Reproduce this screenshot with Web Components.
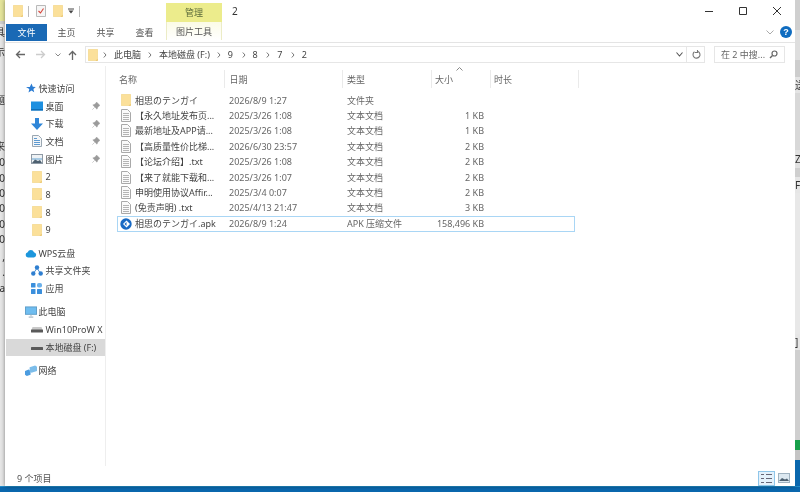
<!DOCTYPE html>
<html lang="zh">
<head>
<meta charset="utf-8">
<title>2</title>
<style>
  html, body { margin: 0; height: 492px; overflow: hidden; background: #0a67ad; }
  body { font: 9px "Noto Sans", "Noto Sans CJK SC", sans-serif; color: #444; }
</style>
</head>
<body>
<x-desktop>
  <x-edge slot="left" side="left"></x-edge>
  <x-window slot="window">
    <x-ribbon></x-ribbon>
    <x-address></x-address>
    <x-nav slot="nav"></x-nav>
    <x-files slot="files"></x-files>
    <x-status slot="status">9 个项目</x-status>
  </x-window>
  <x-edge slot="right" side="right"></x-edge>
</x-desktop>

<script>
const ICONS = {
  folder: `<svg viewBox="0 0 10 12" width="10" height="12"><path d="M.3.500h9.400v11H.3z" fill="#fbe09a" stroke="#f1d27c" stroke-width=".6"/><path d="M7.500 11.700l2.200-2v2z" fill="#e8c46c"/></svg>`,
  doc: `<svg viewBox="0 0 10 13" width="10" height="13"><path d="M.5.500h6l3 3v9h-9z" fill="#fafafa" stroke="#a9a9a9"/><path d="M2 4.500h6M2 6.500h6M2 8.500h6M2 10.500h6" stroke="#b4b4b4"/></svg>`,
  apk: `<svg viewBox="0 0 12 12" width="12" height="12"><circle cx="6" cy="6" r="5.700" fill="#1769c4"/><path d="M6.500 2.500L10 6l-3.500 3.500L3 6z" fill="#fff"/><path d="M4.500 6l2-2v4z" fill="#1769c4"/></svg>`,
  star: `<svg viewBox="0 0 11 11" width="11" height="11"><path d="M6.500.5l1.300 3.300 3 .2-2.400 2 .8 3.300-2.700-1.700-3 2 .8-3.500L1 4h3.800z" fill="#2b7cd3"/></svg>`,
  desk: `<svg viewBox="0 0 12 10" width="12" height="10"><rect width="12" height="9" y=".5" fill="#1e90e0"/><rect y="8" width="12" height="1.500" fill="#0f6fb8"/></svg>`,
  down: `<svg viewBox="0 0 12 12" width="12" height="12"><path d="M4 0h4v5.500h4L6 12 0 5.500h4z" fill="#2f86d8"/></svg>`,
  docs: `<svg viewBox="0 0 10 12" width="10" height="12"><path d="M.5.500h6l3 3v8h-9z" fill="#f4f6f8" stroke="#9aa7b2"/><path d="M2 5.500h6M2 7.500h6M2 9.500h6M2 3.500h3" stroke="#5e9ad0"/></svg>`,
  pic: `<svg viewBox="0 0 12 10" width="12" height="10"><rect x=".5" y=".5" width="11" height="9" fill="#eef2f5" stroke="#8f9aa5"/><path d="M1 4h10v2H1z" fill="#a9cbe4"/><path d="M1 9l3-3.500 3 1.500 2-1 2 3z" fill="#4d6070"/></svg>`,
  cloud: `<svg viewBox="0 0 12 9" width="12" height="9"><path d="M3 8.500a2.700 2.700 0 0 1-.3-5.300A3.400 3.400 0 0 1 9 3.200a2.700 2.700 0 0 1 0 5.300z" fill="#1c96dc"/></svg>`,
  share: `<svg viewBox="0 0 12 11" width="12" height="11"><path d="M6 3L2.500 8.500M6 3l3.500 5.500" stroke="#4d93d8"/><circle cx="6" cy="2.500" r="2.200" fill="#2f7fd0"/><circle cx="2.300" cy="8.500" r="2.200" fill="#2f7fd0"/><circle cx="9.700" cy="8.500" r="2.200" fill="#2f7fd0"/></svg>`,
  apps: `<svg viewBox="0 0 11 11" width="11" height="11"><g fill="#3b8fdc"><rect width="4.500" height="4.500" rx=".6"/><rect x="6" width="5" height="4.500" rx="1.800" fill="#6bb0ea"/><rect y="6" width="4.500" height="5" rx=".6"/><rect x="6" y="6" width="5" height="5" rx=".6"/></g></svg>`,
  pc: `<svg viewBox="0 0 13 12" width="13" height="12"><rect x=".5" y=".5" width="12" height="8" fill="#6fbdf0" stroke="#5d9cc7"/><path d="M4 11h5v1H4z" fill="#8fa3b3"/><path d="M6 9h1v2H6z" fill="#a8b8c4"/></svg>`,
  drive: `<svg viewBox="0 0 12 7" width="12" height="7"><path d="M1.500 1h9l1 3H.5z" fill="#c9c9c9"/><rect y="3.500" width="12" height="3" rx=".5" fill="#595959"/></svg>`,
  driveF: `<svg viewBox="0 0 12 7" width="12" height="7"><rect y="3" width="12" height="3" rx=".5" fill="#5a5a5a"/></svg>`,
  net: `<svg viewBox="0 0 13 12" width="13" height="12"><path d="M0 6l4-1.500 2 1.500V10l-4 1.500L0 10z" fill="#4b9ce0"/><path d="M5 2l6-2 2 1.500V6l-6 2-2-1.500z" fill="#7cbdea"/></svg>`,
  pin: `<svg viewBox="0 0 8 8" width="8" height="8"><path d="M4.500 0L8 3.500 6.800 4 5.500 5.800 5 7.200 .8 3 2.200 2.500 4 1.200zM2.600 5.400L.3 7.700" fill="#9a9a9a" stroke="#9a9a9a" stroke-width=".5"/></svg>`
};

class XDesktop extends HTMLElement {
  constructor() {
    super();
    this.attachShadow({ mode: 'open' });
    this.shadowRoot.innerHTML = `
      <style>
        :host { display: grid; grid-template-columns: 5px 1fr 5px; grid-template-rows: 486px 6px; width: 800px; height: 492px; }
        .bar { grid-column: 1 / 4; background: linear-gradient(#39b4e8 0, #0a67ad 1px); }
      </style>
      <slot name="left"></slot>
      <slot name="window"></slot>
      <slot name="right"></slot>
      <div class="bar"></div>`;
  }
}

// bits of the windows behind, cut off by the window edge
class XEdge extends HTMLElement {
  constructor() {
    super();
    this.attachShadow({ mode: 'open' });
  }
  connectedCallback() {
    const left = this.getAttribute('side') === 'left';
    const L = '#e6e6e6', R = '#d8d8d8';
    const cells = left
      ? [[21, '', '#e4e49a'], [3, '', '#cfcfcf'], [16, '具', L], [4, '', L], [16, '示', L], [32, '', L], [16, '题', L], [30, '', L], [15, '来', L], [1.500, '', L],
         [15.400, '0', L], [15.400, '0', L], [15.400, '0', L], [15.400, '0', L], [15.400, '0', L], [15.400, '0', L], [2.400, '', L],
         [15.400, ',', L], [15.400, '.', L], [15.400, 'a', L], [0, '', L]]
      : [[30, '', '#cfcfcf'], [30, '', '#dedede'], [17, '', '#cdcdcd'], [16, '送', '#e4e4e4'], [57, '', R], [18, 'Z', '#e2e2e2'], [9, '', '#cfcfcf'], [16, 'F', '#e6e6e6'],
         [141, '', '#e8e8e8'], [16, ']', '#e6e6e6'], [90, '', '#cfcfcf'], [10, '', '#18a04a'], [10, '', '#c4c4c4'], [26, '', '#0a67ad']];
    const rows = cells.map(c => {
      const size = c[0] ? `height:${c[0]}px` : 'flex:1';
      return `<div style="${size};background:${c[2]}">${c[1]}</div>`;
    }).join('');
    this.shadowRoot.innerHTML = `
      <style>
        :host { display: flex; flex-direction: column; overflow: hidden; filter: blur(.4px); font: 10px "Noto Sans", "Noto Sans CJK SC", sans-serif; color: #333; }
        div { display: flex; align-items: center; line-height: 1; overflow: hidden; flex: none; justify-content: ${left ? 'flex-end' : 'flex-start'}; }
        div:last-child { flex: 1; }
      </style>${rows}`;
  }
}

class XWindow extends HTMLElement {
  constructor() {
    super();
    this.attachShadow({ mode: 'open' });
    this.shadowRoot.innerHTML = `
      <style>
        :host { display: flex; flex-direction: column; background: #fff; height: 486px; box-shadow: 0 0 4px rgba(0,0,0,.45); position: relative; filter: blur(.35px); }
        .main { display: flex; height: 400px; }
      </style>
      <slot></slot>
      <div class="main">
        <slot name="nav"></slot>
        <slot name="files"></slot>
      </div>
      <slot name="status"></slot>`;
  }
}

class XRibbon extends HTMLElement {
  constructor() {
    super();
    this.attachShadow({ mode: 'open' });
    this.shadowRoot.innerHTML = `
      <style>
        :host { display: grid; grid-template-columns: 161px 56px 1fr; grid-template-rows: 22px 20px; border-bottom: 1px solid #e4e4e4; color: #555; }
        .qat { display: flex; align-items: center; padding-left: 8px; }
        .qat svg { flex: none; }
        .sep { width: 1px; height: 11px; background: #bbb; margin: 0 7px 0 5px; }
        .ctx { margin-top: 3px; background: #ecec8c; display: flex; align-items: center; justify-content: center; color: #5a6a3a; }
        .title { display: flex; align-items: center; padding-left: 10px; color: #333; font-size: 10px; }
        .caption { margin-left: auto; display: flex; align-items: center; gap: 24px; padding-right: 13px; }
        .tabs { display: flex; align-items: center; height: 18px; margin-top: 1px; }
        .file { width: 41px; height: 17px; margin-left: 1px; background: #1a69b5; color: #fff; display: flex; align-items: center; justify-content: center; }
        .tab { width: 39px; text-align: center; }
        .tool { background: linear-gradient(#fbfbe6, #fff); border: solid #ececc6; border-width: 0 1px; display: flex; align-items: center; justify-content: center; height: 18px; }
        .right { display: flex; align-items: center; justify-content: flex-end; gap: 6px; padding: 0 3px 0 0; }
        .help { width: 12px; height: 12px; border-radius: 50%; background: #0f6cc0; color: #fff; font: bold 9px/12px "Liberation Sans", sans-serif; text-align: center; }
      </style>
      <div class="qat">
        ${ICONS.folder}
        <span class="sep"></span>
        <svg viewBox="0 0 10 12" width="10" height="12"><path d="M.5.500h9v11h-9z" fill="#f6f6f6" stroke="#b9b9b9"/><path d="M2.500 6l2 2 3-4.500" fill="none" stroke="#d8443a" stroke-width="1.100"/></svg>
        <span style="width:7px"></span>
        ${ICONS.folder}
        <svg viewBox="0 0 6 6" width="6" height="6" style="margin-left:5px"><path d="M0 1h6" stroke="#444"/><path d="M.5 2.500h5L3 5.500z" fill="#444"/></svg>
        <span class="sep" style="margin-left:5px"></span>
      </div>
      <div class="ctx">管理</div>
      <div class="title">2
        <div class="caption">
          <svg viewBox="0 0 10 10" width="10" height="10"><path d="M1 5.500h8" stroke="#333"/></svg>
          <svg viewBox="0 0 10 10" width="10" height="10"><path d="M1.500 1.500h7v7h-7z" fill="none" stroke="#333"/></svg>
          <svg viewBox="0 0 10 10" width="10" height="10"><path d="M1 1l8 8M9 1l-8 8" stroke="#333"/></svg>
        </div>
      </div>
      <div class="tabs">
        <span class="file">文件</span><span class="tab">主页</span><span class="tab">共享</span><span class="tab">查看</span>
      </div>
      <div class="tool">图片工具</div>
      <div class="right">
        <svg viewBox="0 0 8 5" width="8" height="5"><path d="M.5.500L4 4 7.500.5" fill="none" stroke="#aaa"/></svg>
        <span class="help">?</span>
      </div>`;
  }
}

class XAddress extends HTMLElement {
  constructor() {
    super();
    this.attachShadow({ mode: 'open' });
    const crumbs = ['此电脑', '本地磁盘 (F:)', '9', '8', '7', '2'];
    const sep = '<svg viewBox="0 0 4 6" width="4" height="6"><path d="M.8.500L3 3 .8 5.500" fill="none" stroke="#777"/></svg>';
    this.shadowRoot.innerHTML = `
      <style>
        :host { display: flex; align-items: center; height: 17px; margin-top: 3px; padding-bottom: 3px; color: #444; }
        .nav { display: flex; align-items: center; width: 80px; flex: none; }
        .box { display: flex; align-items: center; width: 620px; height: 17px; box-sizing: border-box; border: 1px solid #e6e6e6; padding-left: 2px; flex: none; }
        .crumbs { display: flex; align-items: center; gap: 7px; margin-left: 5px; }
        .crumbs .d { padding-right: 1.500px; }
        .end { margin-left: auto; display: flex; align-items: center; height: 100%; gap: 3px; padding-right: 3px; }
        .search { display: flex; align-items: center; justify-content: space-between; width: 71px; height: 17px; box-sizing: border-box; border: 1px solid #e6e6e6; margin-left: 9px; padding: 0 6px 0 6px; color: #666; flex: none; }
      </style>
      <div class="nav">
        <svg style="margin-left:10px" viewBox="0 0 10 9" width="10" height="9"><path d="M10 4.500H2M5 1L1.500 4.500 5 8" fill="none" stroke="#666" stroke-width="1.300"/></svg>
        <svg style="margin-left:11px" viewBox="0 0 10 9" width="10" height="9"><path d="M0 4.500h8M5 1l3.500 3.500L5 8" fill="none" stroke="#ccc" stroke-width="1.300"/></svg>
        <svg style="margin-left:9px" viewBox="0 0 6 4" width="6" height="4"><path d="M.5.500L3 3 5.500.5" fill="none" stroke="#888"/></svg>
        <svg style="margin-left:7px" viewBox="0 0 9 10" width="9" height="10"><path d="M4.500 10V2M1 5l3.500-3.500L8 5" fill="none" stroke="#666" stroke-width="1.300"/></svg>
      </div>
      <div class="box">
        ${ICONS.folder}
        <div class="crumbs"></div>
        <div class="end">
          <svg viewBox="0 0 7 5" width="7" height="5"><path d="M.5.500L3.500 4l3-3.500" fill="none" stroke="#555" stroke-width="1.100"/></svg>
          <span style="width:1px;height:100%;background:#e6e6e6"></span>
          <svg viewBox="0 0 9 9" width="9" height="9" style="margin-left:2px"><path d="M2.500 1.800a3.500 3.500 0 1 0 3.500-.3M5.500 0v2.500H3" fill="none" stroke="#777" stroke-width="1.100"/></svg>
        </div>
      </div>
      <div class="search">
        <span>在 2 中搜...</span>
        <svg viewBox="0 0 9 9" width="9" height="9"><circle cx="5.500" cy="3.500" r="2.500" fill="none" stroke="#666" stroke-width="1.200"/><path d="M3.500 5.500L1 8" stroke="#666" stroke-width="1.400"/></svg>
      </div>`;
    this.shadowRoot.querySelector('.crumbs').innerHTML =
      sep + crumbs.map(c => `<span${c.length === 1 ? ' class="d"' : ''}>${c}</span>`).join(sep);
  }
}

class XNavItem extends HTMLElement {
  constructor() {
    super();
    this.attachShadow({ mode: 'open' });
    this.shadowRoot.innerHTML = `
      <style>
        :host { display: flex; align-items: center; height: 17.700px; color: #444; white-space: nowrap; overflow: hidden; }
        :host([selected]) { background: #d9d9d9; }
        .icon { display: flex; align-items: center; justify-content: center; width: 12px; flex: none; margin-right: 3px; }
        :host(:not([child])) .icon { margin-right: 2px; }
        .pin { margin-left: auto; margin-right: 5px; display: flex; }
      </style>
      <span class="icon"></span><slot></slot><span class="pin"></span>`;
  }
  connectedCallback() {
    const child = this.hasAttribute('child');
    this.style.paddingLeft = child ? '24.5px' : '18.5px';
    this.shadowRoot.querySelector('.icon').innerHTML = ICONS[this.getAttribute('icon')];
    if (this.hasAttribute('pinned')) this.shadowRoot.querySelector('.pin').innerHTML = ICONS.pin;
  }
}
customElements.define('x-nav-item', XNavItem);

class XNav extends HTMLElement {
  constructor() {
    super();
    this.attachShadow({ mode: 'open' });
    const items = [
      ['快速访问', 'star'], ['桌面', 'desk', 1, 1], ['下载', 'down', 1, 1], ['文档', 'docs', 1, 1], ['图片', 'pic', 1, 1],
      ['2', 'folder', 1], ['8', 'folder', 1], ['8', 'folder', 1], ['9', 'folder', 1], null,
      ['WPS云盘', 'cloud'], ['共享文件夹', 'share', 1], ['应用', 'apps', 1], null,
      ['此电脑', 'pc'], ['Win10ProW X', 'drive', 1], ['本地磁盘 (F:)', 'driveF', 1, 0, 1], null,
      ['网络', 'net']
    ];
    this.shadowRoot.innerHTML = `
      <style>
        :host { display: block; width: 101px; height: 100%; box-sizing: border-box; border-right: 1px solid #eee; padding: 13.500px 0 0 1px; }
        .gap { height: 5.700px; }
      </style>` + items.map(i => {
        if (!i) return '<div class="gap"></div>';
        const attrs = (i[2] ? ' child' : '') + (i[3] ? ' pinned' : '') + (i[4] ? ' selected' : '');
        return `<x-nav-item icon="${i[1]}"${attrs}>${i[0]}</x-nav-item>`;
      }).join('');
  }
}

class XFileRow extends HTMLElement {
  constructor() {
    super();
    this.attachShadow({ mode: 'open' });
    this.shadowRoot.innerHTML = `
      <style>
        :host { display: grid; grid-template-columns: 112px 118px 88px 49px; align-items: center; width: 458px; height: 15.400px; box-sizing: border-box; white-space: nowrap; color: #666; }
        :host([selected]) { box-shadow: inset 0 0 0 1px #a9d6f5; height: 16.400px; }
        .name { display: flex; align-items: center; color: #444; padding-left: 3px; }
        .icon { display: flex; width: 12px; margin-right: 3px; justify-content: center; flex: none; }
        .size { text-align: right; }
      </style>
      <div class="name"><span class="icon"></span><slot></slot></div>
      <div class="date"></div><div class="type"></div><div class="size"></div>`;
  }
  connectedCallback() {
    const $ = s => this.shadowRoot.querySelector(s);
    $('.icon').innerHTML = ICONS[this.getAttribute('icon')];
    $('.date').textContent = this.getAttribute('date');
    $('.type').textContent = this.getAttribute('type');
    $('.size').textContent = this.getAttribute('size') || '';
  }
}
customElements.define('x-file-row', XFileRow);

class XFiles extends HTMLElement {
  constructor() {
    super();
    this.attachShadow({ mode: 'open' });
    const T = '文本文档';
    const rows = [
      ['相思のテンガイ', 'folder', '2026/8/9 1:27', '文件夹', ''],
      ['【永久地址发布页...', 'doc', '2025/3/26 1:08', T, '1 KB'],
      ['最新地址及APP请...', 'doc', '2025/3/26 1:08', T, '1 KB'],
      ['【高质量性价比梯...', 'doc', '2026/6/30 23:57', T, '2 KB'],
      ['【论坛介绍】.txt', 'doc', '2025/3/26 1:08', T, '2 KB'],
      ['【来了就能下载和...', 'doc', '2025/3/26 1:07', T, '2 KB'],
      ['申明使用协议Affir...', 'doc', '2025/3/4 0:07', T, '2 KB'],
      ['(免责声明) .txt', 'doc', '2025/4/13 21:47', T, '3 KB'],
      ['相思のテンガイ.apk', 'apk', '2026/8/9 1:24', 'APK 压缩文件', '158,496 KB']
    ];
    const cols = [['名称', 108, 2], ['日期', 118, 4.5], ['类型', 89, 4], ['大小', 59, 3], ['时长', 88, 3]];
    this.shadowRoot.innerHTML = `
      <style>
        :host { display: block; flex: 1; padding: 4px 0 0 11px; color: #666; }
        .head { display: flex; height: 18px; margin-bottom: 4.500px; position: relative; }
        .head div { display: flex; align-items: center; box-sizing: border-box; border-right: 1px solid #eaeaea; flex: none; }
        .caret { position: absolute; left: 339px; top: -3px; }
      </style>
      <div class="head">
        ${cols.map(c => `<div style="width:${c[1]}px;padding-left:${c[2]}px">${c[0]}</div>`).join('')}
        <svg class="caret" viewBox="0 0 7 4" width="7" height="4"><path d="M.5 3.500L3.500.5l3 3" fill="none" stroke="#888"/></svg>
      </div>
      ${rows.map((r, i) => `<x-file-row icon="${r[1]}" date="${r[2]}" type="${r[3]}" size="${r[4]}"${i === 8 ? ' selected' : ''}>${r[0]}</x-file-row>`).join('')}`;
  }
}

class XStatus extends HTMLElement {
  constructor() {
    super();
    this.attachShadow({ mode: 'open' });
    this.shadowRoot.innerHTML = `
      <style>
        :host { display: flex; align-items: center; height: 20px; padding: 4px 5px 0 12px; box-sizing: border-box; color: #555; }
        .views { margin-left: auto; display: flex; gap: 3px; align-items: center; }
        .on { display: flex; padding: 1px 2px; border: 1px solid #8fc6ea; background: #e4f1fb; }
      </style>
      <slot></slot>
      <div class="views">
        <span class="on"><svg viewBox="0 0 11 11" width="11" height="11"><path d="M0 1.500h3M0 5.500h3M0 9.500h3M5 1.500h6M5 5.500h6M5 9.500h6" stroke="#667"/></svg></span>
        <svg viewBox="0 0 12 10" width="12" height="10"><rect x=".5" y=".5" width="11" height="9" fill="#dce8f0" stroke="#9fb2c0"/><path d="M1 8l3-3 3 1.500 2-1 2 2.500z" fill="#4d6070"/></svg>
      </div>`;
  }
}

customElements.define('x-desktop', XDesktop);
customElements.define('x-edge', XEdge);
customElements.define('x-window', XWindow);
customElements.define('x-ribbon', XRibbon);
customElements.define('x-address', XAddress);
customElements.define('x-nav', XNav);
customElements.define('x-files', XFiles);
customElements.define('x-status', XStatus);
</script>
</body>
</html>
